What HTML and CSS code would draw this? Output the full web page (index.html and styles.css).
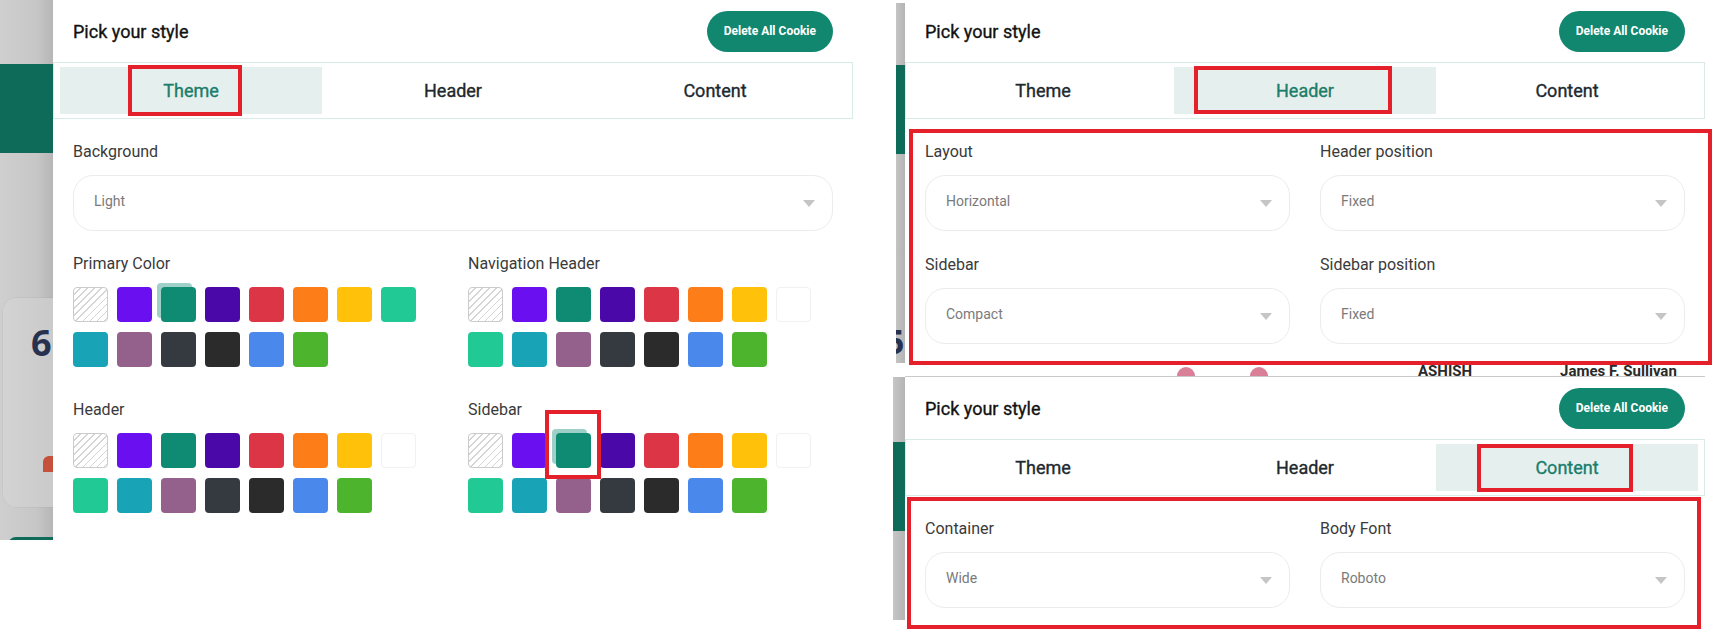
FILE: index.html
```html
<!DOCTYPE html>
<html lang="en">
<head>
<meta charset="utf-8">
<title>Pick your style</title>
<link rel="stylesheet" href="styles.css">
</head>
<body>
<div class="canvas">

  <section class="shot shot-theme">
    <div class="backdrop bd-wide">
      <div class="bd-band"></div>
      <div class="bd-card"><span class="bd-num">6</span><span class="bd-pill"></span></div>
      <div class="bd-foot"></div>
    </div>
    <div class="panel">
      <div class="panel-head"><h2>Pick your style</h2><button class="btn">Delete All Cookie</button></div>
      <div class="tabs"><div class="tab active">Theme</div><div class="tab">Header</div><div class="tab">Content</div></div>
      <div class="tab-body">
        <div class="field">
          <label>Background</label>
          <div class="select"><span>Light</span><i class="caret"></i></div>
        </div>
        <div class="color-grid">
          <div class="color-group">
            <label>Primary Color</label>
            <div class="swatches">
              <span class="sw hatch"></span><span class="sw c-purple"></span><span class="sw c-teal selected"></span><span class="sw c-indigo"></span><span class="sw c-red"></span><span class="sw c-orange"></span><span class="sw c-yellow"></span><span class="sw c-mint"></span>
              <span class="sw c-cyan"></span><span class="sw c-plum"></span><span class="sw c-dark"></span><span class="sw c-black"></span><span class="sw c-blue"></span><span class="sw c-green"></span>
            </div>
          </div>
          <div class="color-group">
            <label>Navigation Header</label>
            <div class="swatches">
              <span class="sw hatch"></span><span class="sw c-purple"></span><span class="sw c-teal"></span><span class="sw c-indigo"></span><span class="sw c-red"></span><span class="sw c-orange"></span><span class="sw c-yellow"></span><span class="sw c-white"></span>
              <span class="sw c-mint"></span><span class="sw c-cyan"></span><span class="sw c-plum"></span><span class="sw c-dark"></span><span class="sw c-black"></span><span class="sw c-blue"></span><span class="sw c-green"></span>
            </div>
          </div>
          <div class="color-group">
            <label>Header</label>
            <div class="swatches">
              <span class="sw hatch"></span><span class="sw c-purple"></span><span class="sw c-teal"></span><span class="sw c-indigo"></span><span class="sw c-red"></span><span class="sw c-orange"></span><span class="sw c-yellow"></span><span class="sw c-white"></span>
              <span class="sw c-mint"></span><span class="sw c-cyan"></span><span class="sw c-plum"></span><span class="sw c-dark"></span><span class="sw c-black"></span><span class="sw c-blue"></span><span class="sw c-green"></span>
            </div>
          </div>
          <div class="color-group">
            <label>Sidebar</label>
            <div class="swatches">
              <span class="sw hatch"></span><span class="sw c-purple"></span><span class="sw c-teal selected"></span><span class="sw c-indigo"></span><span class="sw c-red"></span><span class="sw c-orange"></span><span class="sw c-yellow"></span><span class="sw c-white"></span>
              <span class="sw c-mint"></span><span class="sw c-cyan"></span><span class="sw c-plum"></span><span class="sw c-dark"></span><span class="sw c-black"></span><span class="sw c-blue"></span><span class="sw c-green"></span>
            </div>
          </div>
        </div>
      </div>
    </div>
    <div class="mark mark-theme-tab"></div>
    <div class="mark mark-sidebar-swatch"></div>
  </section>

  <div class="right-col">
    <section class="shot shot-header">
      <div class="backdrop bd-narrow">
        <div class="bd-band"></div>
        <div class="bd-num-cut">5</div>
      </div>
      <div class="panel">
        <div class="panel-head"><h2>Pick your style</h2><button class="btn">Delete All Cookie</button></div>
        <div class="tabs"><div class="tab">Theme</div><div class="tab active">Header</div><div class="tab">Content</div></div>
        <div class="tab-body">
          <div class="field-grid">
            <div class="field"><label>Layout</label><div class="select"><span>Horizontal</span><i class="caret"></i></div></div>
            <div class="field"><label>Header position</label><div class="select"><span>Fixed</span><i class="caret"></i></div></div>
            <div class="field"><label>Sidebar</label><div class="select"><span>Compact</span><i class="caret"></i></div></div>
            <div class="field"><label>Sidebar position</label><div class="select"><span>Fixed</span><i class="caret"></i></div></div>
          </div>
        </div>
      </div>
      <div class="mark mark-header-tab"></div>
      <div class="mark mark-header-body"></div>
    </section>

    <div class="sliver">
      <span class="sl-dot sl-d1"></span><span class="sl-dot sl-d2"></span>
      <span class="sl-text sl-t1">ASHISH</span><span class="sl-text sl-t2">James F. Sullivan</span>
    </div>

    <section class="shot shot-content">
      <div class="backdrop bd-mid">
        <div class="bd-band"></div>
      </div>
      <div class="panel">
        <div class="panel-head"><h2>Pick your style</h2><button class="btn">Delete All Cookie</button></div>
        <div class="tabs"><div class="tab">Theme</div><div class="tab">Header</div><div class="tab active">Content</div></div>
        <div class="tab-body">
          <div class="field-grid">
            <div class="field"><label>Container</label><div class="select"><span>Wide</span><i class="caret"></i></div></div>
            <div class="field"><label>Body Font</label><div class="select"><span>Roboto</span><i class="caret"></i></div></div>
          </div>
        </div>
      </div>
      <div class="mark mark-content-tab"></div>
      <div class="mark mark-content-body"></div>
    </section>
  </div>

</div>
</body>
</html>
```
FILE: styles.css
```css
* { box-sizing: border-box; margin: 0; padding: 0; }

html, body {
  width: 1724px;
  height: 644px;
  overflow: hidden;
  background: #fff;
}

body {
  font-family: Roboto, "Noto Sans", "Liberation Sans", sans-serif;
  color: #3a3a3a;
}

.canvas {
  display: flex;
  align-items: flex-start;
}

/* ---------- screenshot frames ---------- */
.shot {
  position: relative;
  display: flex;
  background: #fff;
}

.shot-theme { width: 855px; height: 540px; }

.right-col {
  margin-left: 38px;
  display: flex;
  flex-direction: column;
}

.shot-header { margin-left: 3px; height: 363px; }
.shot-content { height: 243px; }

/* ---------- dimmed page behind the drawer ---------- */
.backdrop {
  flex: none;
  overflow: hidden;
  display: flex;
  flex-direction: column;
  background: linear-gradient(to right, #cfcfcf 0%, #c6c6c6 70%, #b6b6b6 100%);
}

.bd-wide { width: 53px; }
.bd-narrow { width: 9px; margin-top: 3px; background: linear-gradient(to right, #c4c4c4, #b4b4b4); }
.bd-mid { width: 12px; background: linear-gradient(to right, #c6c6c6, #b4b4b4); }

.bd-band {
  flex: none;
  height: 89px;
  margin-top: 64px;
  background: #0e6b5a;
}

.bd-narrow .bd-band { margin-top: 62px; }
.bd-mid .bd-band { margin-top: 65px; }

.bd-card {
  flex: none;
  width: 80px;
  height: 209px;
  margin: 145px 0 0 3px;
  border-radius: 14px;
  background: linear-gradient(to right, #d3d3d3, #c9c9c9 70%, #bdbdbd);
  box-shadow: 0 0 0 1px rgba(0,0,0,0.03);
  display: flex;
  flex-direction: column;
  padding: 27px 0 0 28px;
}

.bd-num {
  font-family: "Open Sans", "Noto Sans", sans-serif;
  font-weight: 700;
  font-size: 36px;
  line-height: 36px;
  color: #273150;
}

.bd-pill {
  width: 20px;
  height: 16px;
  margin: 95px 0 0 12px;
  border-radius: 6px 6px 0 0;
  background: #c5503b;
}

.bd-foot {
  flex: none;
  width: 60px;
  height: 8px;
  margin: 30px 0 0 8px;
  border-radius: 12px 12px 0 0;
  background: #0e6b5a;
}

.bd-num-cut {
  margin: 172px 0 0 -11px;
  font-family: "Open Sans", "Noto Sans", sans-serif;
  font-weight: 700;
  font-size: 34px;
  line-height: 30px;
  color: #273150;
}

/* ---------- drawer panel ---------- */
.panel {
  flex: none;
  width: 800px;
  background: #fff;
}

.panel-head {
  height: 62px;
  display: flex;
  align-items: center;
  justify-content: space-between;
  padding: 0 20px;
}

.panel-head h2 {
  font-size: 18px;
  font-weight: 400;
  -webkit-text-stroke: 0.35px currentColor;
  color: #121212;
}

.btn {
  height: 41px;
  padding: 0 17px;
  border: 0;
  border-radius: 21px;
  background: #12876f;
  color: #fff;
  font-family: Roboto, sans-serif;
  font-size: 12px;
  font-weight: 700;
}

.tabs {
  display: grid;
  grid-template-columns: repeat(3, 1fr);
  padding: 4px 6px;
  border: 1px solid #d9ebe7;
}

.tab {
  height: 47px;
  display: flex;
  align-items: center;
  justify-content: center;
  font-size: 18px;
  font-weight: 400;
  -webkit-text-stroke: 0.35px currentColor;
  color: #20292f;
}

.tab.active {
  background: #e5f0ee;
  color: #1b7d6b;
}

.tab-body { padding: 21px 20px 0; }

label {
  display: block;
  font-size: 16px;
  line-height: 24px;
  color: #3a3a3a;
}

.select {
  margin-top: 11px;
  height: 56px;
  border: 1px solid #ececec;
  border-radius: 20px;
  padding: 0 17px 0 20px;
  display: flex;
  align-items: center;
  justify-content: space-between;
  font-size: 14px;
  color: #7a7a7a;
}

.select span { margin-bottom: 5px; }

.caret {
  width: 0;
  height: 0;
  border-left: 6px solid transparent;
  border-right: 6px solid transparent;
  border-top: 7px solid #c5c5c5;
  margin-top: 1px;
}

.field-grid {
  display: grid;
  grid-template-columns: 1fr 1fr;
  column-gap: 30px;
  row-gap: 22px;
}

.color-grid {
  margin-top: 21px;
  display: grid;
  grid-template-columns: 1fr 1fr;
  column-gap: 30px;
  row-gap: 31px;
}

.swatches {
  margin-top: 11px;
  display: flex;
  flex-wrap: wrap;
  gap: 10px 9px;
}

.sw {
  width: 35px;
  height: 35px;
  border-radius: 4px;
}

.sw.selected { box-shadow: -4px -4px 0 0 rgba(15, 138, 116, 0.4); }

.hatch {
  border: 1px solid #cbcbcb;
  background: repeating-linear-gradient(135deg, #fff 0 4px, #d4d4d4 4px 5px);
}

.c-purple { background: #6a10f0; }
.c-teal { background: #0f8a73; }
.c-indigo { background: #4b08a8; }
.c-red { background: #dc3545; }
.c-orange { background: #fd7e18; }
.c-yellow { background: #ffc10a; }
.c-mint { background: #21c995; }
.c-cyan { background: #18a3b7; }
.c-plum { background: #93618c; }
.c-dark { background: #343a40; }
.c-black { background: #2b2b2b; }
.c-blue { background: #4a88eb; }
.c-green { background: #4db42d; }
.c-white { background: #fff; border: 1px solid #f1f1f1; }

/* ---------- sliver of page between screenshots ---------- */
.sliver {
  position: relative;
  height: 14px;
  margin-left: 12px;
  width: 800px;
  overflow: hidden;
  border-bottom: 1px solid #c9c9c9;
}

.sl-dot {
  position: absolute;
  top: 4px;
  width: 18px;
  height: 18px;
  border-radius: 50%;
  background: #c94a6c;
  opacity: 0.7;
}

.sl-d1 { left: 272px; }
.sl-d2 { left: 345px; }

.sl-text {
  position: absolute;
  top: -1px;
  font-size: 15px;
  font-weight: 700;
  color: #2a2a2a;
}

.sl-t1 { left: 513px; }
.sl-t2 { left: 655px; }

/* ---------- red annotation frames ---------- */
.mark {
  position: absolute;
  border: 4px solid #e4202b;
}

.mark-theme-tab { left: 128px; top: 65px; width: 114px; height: 51px; }
.mark-sidebar-swatch { left: 545px; top: 410px; width: 56px; height: 69px; }

.mark-header-tab { left: 298px; top: 66px; width: 198px; height: 48px; }
.mark-header-body { left: 13px; top: 129px; width: 803px; height: 236px; }

.mark-content-tab { left: 584px; top: 67px; width: 156px; height: 48px; }
.mark-content-body { left: 14px; top: 120px; width: 794px; height: 132px; }
```
